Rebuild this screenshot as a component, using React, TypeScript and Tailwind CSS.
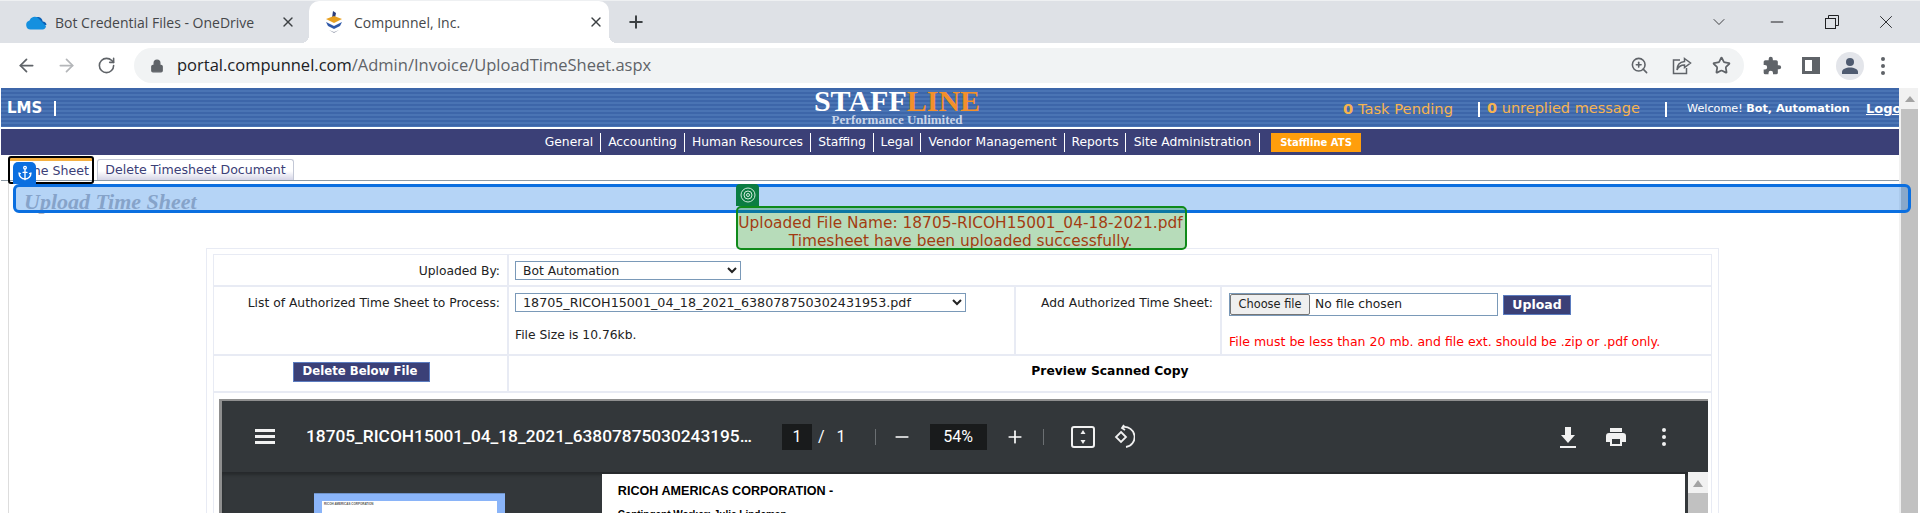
import { ArrowLeft, ArrowRight, Anchor, ChevronDown, Lock, Minus, Plus, RotateCw, Star, X, ZoomIn } from "lucide-react";

const verdana = "font-['DejaVu_Sans',sans-serif]";

function OneDriveIcon() {
  return (
    <svg width="22" height="16" viewBox="0 0 22 16">
      <path d="M8 5a5.5 5.5 0 0 1 9.7 2.4A4 4 0 0 1 21.5 11H9z" fill="#0a5fb4" />
      <path d="M5.5 15.5a4.6 4.6 0 0 1-1-9 5.5 5.5 0 0 1 8.6-2.6L21 12a4 4 0 0 1-3.5 3.5z" fill="#1490df" />
    </svg>
  );
}

function CompunnelIcon() {
  return (
    <svg width="20" height="24" viewBox="0 0 20 24">
      <path d="M9 1l3 2-1 5H8z" fill="#2c3e7c" />
      <path d="M2 9l8-3 8 3-8 4z" fill="#e8a020" />
      <path d="M2 12l8 4 8-4-2 4-6 3-6-3z" fill="#2f58a8" />
      <path d="M5 20l5 2 5-2-5 3z" fill="#9aa0b0" />
    </svg>
  );
}

function PuzzleIcon() {
  return (
    <svg width="20" height="20" viewBox="0 0 24 24" fill="#5f6368">
      <path d="M20.5 11H19V7a2 2 0 0 0-2-2h-4V3.5a2.5 2.5 0 0 0-5 0V5H4a2 2 0 0 0-2 2v3.8h1.5a2.7 2.7 0 0 1 0 5.4H2V20a2 2 0 0 0 2 2h3.8v-1.5a2.7 2.7 0 0 1 5.4 0V22H17a2 2 0 0 0 2-2v-4h1.5a2.5 2.5 0 0 0 0-5z" />
    </svg>
  );
}

function RestoreIcon() {
  return (
    <svg className="ml-[38px]" width="14" height="14" viewBox="0 0 14 14" fill="none" stroke="#202124" strokeWidth="1">
      <rect x="0.500" y="3.500" width="10" height="10" />
      <path d="M3.500 3.500V0.500h10v10h-3" />
    </svg>
  );
}

function ShareIcon() {
  return (
    <svg className="ml-[23px]" width="20" height="18" viewBox="0 0 20 18" fill="none" stroke="#5f6368" strokeWidth="1.500">
      <path d="M8 3H1.500v13.500h13V11" />
      <path d="M12.500 1.500L18.500 6l-6 4.500V8C9 8 6.500 9.500 5 13c0-5 3-8 7.500-8.500z" />
    </svg>
  );
}

function BrowserChrome() {
  return (
    <>
      <div className="relative flex h-[43px] items-end border-t border-t-[#eef0f2] bg-[#dee1e6] font-['Open_Sans',sans-serif] text-[14px] text-[#45474a]">
        <div className="flex h-[42px] w-[309px] items-center pl-[25px]">
          <OneDriveIcon />
          <span className="ml-[8px] w-[225px] truncate">Bot Credential Files - OneDrive</span>
          <X size={16} strokeWidth={2} className="text-[#3c4043]" />
        </div>
        <div className="relative flex h-[42px] w-[300px] items-center rounded-t-[10px] bg-white pl-[15px]">
          <span className="absolute bottom-0 left-[-8px] h-[8px] w-[8px] bg-[radial-gradient(circle_at_0_0,transparent_8px,white_8px)]" />
          <span className="absolute bottom-0 right-[-8px] h-[8px] w-[8px] bg-[radial-gradient(circle_at_100%_0,transparent_8px,white_8px)]" />
          <CompunnelIcon />
          <span className="ml-[10px] w-[234px] truncate">Compunnel, Inc.</span>
          <X size={16} strokeWidth={2} className="text-[#3c4043]" />
        </div>
        <div className="flex h-[42px] w-[1100px] items-center pl-[17px]">
          <Plus size={20} strokeWidth={2.4} className="text-[#3c4043]" />
        </div>
        <div className="flex h-[42px] items-center text-[#202124]">
          <ChevronDown size={20} strokeWidth={1} />
          <Minus size={20} strokeWidth={1.2} className="ml-[38px]" />
          <RestoreIcon />
          <X size={22} strokeWidth={1} className="ml-[36px]" />
        </div>
      </div>
      <div className="flex h-[45px] items-center bg-white text-[#5f6368]">
        <ArrowLeft size={21} className="ml-[16px]" />
        <ArrowRight size={21} className="ml-[19px] text-[#b4b6b9]" />
        <RotateCw size={19} className="ml-[20px]" />
        <div className="ml-[18px] flex h-[35px] w-[1610px] items-center rounded-full bg-[#f1f3f4] pl-[16px]">
          <Lock size={14} fill="#5f6368" />
          <span className="ml-[13px] font-['Open_Sans',sans-serif] text-[16.5px] text-[#5f6368]">
            <span className="text-[#202124]">portal.compunnel.com</span>/Admin/Invoice/UploadTimeSheet.aspx
          </span>
          <ZoomIn size={19} className="ml-auto" />
          <ShareIcon />
          <Star size={19} strokeWidth={2.2} className="ml-[20px] mr-[13px]" />
        </div>
        <div className="ml-[18px]"><PuzzleIcon /></div>
        <div className="ml-[20px] flex h-[17px] w-[18px] justify-end border-[3px] border-[#5f6368] bg-white">
          <div className="h-full w-[5px] bg-[#5f6368]" />
        </div>
        <div className="ml-[16px] flex h-[28px] w-[28px] items-center justify-center rounded-full bg-[#e3e5ea]">
          <svg width="18" height="18" viewBox="0 0 18 18" fill="#4f5b70">
            <circle cx="9" cy="5" r="4" />
            <path d="M1 17v-2c0-3 4-4.500 8-4.500s8 1.500 8 4.500v2z" />
          </svg>
        </div>
        <div className="ml-[17px] flex flex-col gap-[3px]">
          <span className="h-[4px] w-[4px] rounded-full bg-[#5f6368]" />
          <span className="h-[4px] w-[4px] rounded-full bg-[#5f6368]" />
          <span className="h-[4px] w-[4px] rounded-full bg-[#5f6368]" />
        </div>
      </div>
    </>
  );
}

function PortalHeader() {
  return (
    <div className="flex h-[39px] items-center whitespace-nowrap bg-[repeating-linear-gradient(180deg,#3d66a9_0px,#3d66a9_2px,#4a74b4_2px,#4a74b4_4px)] font-['DejaVu_Sans',sans-serif]">
      <span className="ml-[6px] mt-[1px] w-[47px] shrink-0 text-[15px] font-bold text-white">LMS</span>
      <span className="mt-[2px] h-[15px] w-[2px] shrink-0 bg-white" />
      <div className="ml-[759px] flex w-[164px] shrink-0 flex-col items-center">
        <span className="font-['Liberation_Serif',serif] text-[30px] leading-[24px] font-bold text-white">
          STAFF<span className="text-[#f3902b]">LINE</span>
        </span>
        <span className="mt-[1px] font-['Liberation_Serif',serif] text-[13px] leading-[12px] font-bold text-[#c9d4e8]">Performance Unlimited</span>
      </div>
      <span className="ml-[364px] mt-[3px] w-[110px] shrink-0 text-[14.700px] text-[#f7b34f]"><b>0</b> Task Pending</span>
      <span className="ml-[25px] mt-[3px] h-[15px] w-[2px] shrink-0 bg-white" />
      <span className="ml-[7px] mt-[3px] w-[152px] shrink-0 text-[14.500px] text-[#f7b34f]"><b>0</b> unreplied message</span>
      <span className="ml-[26px] mt-[3px] h-[15px] w-[2px] shrink-0 bg-white" />
      <span className="ml-[20px] mt-[3px] w-[162px] shrink-0 text-[11.200px] text-white">Welcome! <b>Bot, Automation</b></span>
      <span className="ml-[17px] mt-[2px] w-[33px] shrink-0 overflow-hidden text-[13px] font-bold text-white underline">Logout</span>
    </div>
  );
}

function NavBar() {
  return (
    <div className="flex h-[26px] items-center bg-[#3b4077] pl-[537px] font-['DejaVu_Sans',sans-serif] text-[12.300px] text-white">
      <span className="h-[19px] w-[63px] border-r border-white text-center leading-[18px]">General</span>
      <span className="h-[19px] w-[84px] border-r border-white text-center leading-[18px]">Accounting</span>
      <span className="h-[19px] w-[126px] border-r border-white text-center leading-[18px]">Human Resources</span>
      <span className="h-[19px] w-[63px] border-r border-white text-center leading-[18px]">Staffing</span>
      <span className="h-[19px] w-[47px] border-r border-white text-center leading-[18px]">Legal</span>
      <span className="h-[19px] w-[144px] border-r border-white text-center leading-[18px]">Vendor Management</span>
      <span className="h-[19px] w-[61px] border-r border-white text-center leading-[18px]">Reports</span>
      <span className="h-[19px] w-[134px] border-r border-white text-center leading-[18px]">Site Administration</span>
      <span className="ml-[11px] h-[19px] w-[90px] bg-[#ff9e0c] text-center text-[10px] leading-[19px] font-bold">Staffline ATS</span>
    </div>
  );
}

function TabRow() {
  return (
    <div className={`flex h-[26px] items-end border-b border-[#8d9aa5] pl-[9px] text-[12.600px] text-[#3b4077] ${verdana}`}>
      <div className="h-[22px] w-[84px] border-t-[3px] border-t-[#f5b041] pr-[5px] text-right leading-[20px] whitespace-nowrap">Time Sheet</div>
      <div className="ml-[3px] h-[21px] w-[197px] rounded-t-[3px] border border-b-0 border-[#c3c8d6] bg-[linear-gradient(180deg,#ffffff_55%,#d5d5e6)] text-center leading-[20px] whitespace-nowrap">
        Delete Timesheet Document
      </div>
    </div>
  );
}

function Message() {
  return (
    <div className="flex h-[67px] flex-col">
      <h2 className="ml-[15px] mt-[10px] h-[24px] font-['Liberation_Serif',serif] text-[22px] leading-[22px] font-bold text-[#bcb9bf] italic">
        Upload Time Sheet
      </h2>
      <div className={`ml-[13px] mt-[1px] text-center text-[15.400px] leading-[18px] text-[#e2170f] ${verdana}`}>
        <p>Uploaded File Name: 18705-RICOH15001_04-18-2021.pdf</p>
        <p>Timesheet have been uploaded successfully.</p>
      </div>
    </div>
  );
}

function UploadForm() {
  return (
    <div className={`ml-[197px] w-[1513px] border border-[#e8ebf4] px-[6px] pt-[5px] pb-0 text-[12.300px] text-[#222222] ${verdana}`}>
      <div className="border border-[#e8ebf4]">
        <div className="flex h-[32px] border-b-2 border-[#e8ebf4]">
          <div className="w-[295px] border-r-2 border-[#e8ebf4] pt-[7px] pr-[7px] text-right">Uploaded By:</div>
          <div className="pl-[6px] pt-[6px]">
            <select defaultValue="bot" className="h-[19px] w-[226px] border border-[#7a99b8] bg-white pl-[3px] text-[12.300px]">
              <option value="bot">Bot Automation</option>
            </select>
          </div>
        </div>
        <div className="flex h-[69px] border-b-2 border-[#e8ebf4]">
          <div className="w-[295px] border-r-2 border-[#e8ebf4] pt-[7px] pr-[7px] text-right">List of Authorized Time Sheet to Process:</div>
          <div className="w-[507px] border-r-2 border-[#e8ebf4] pl-[6px] pt-[6px]">
            <select defaultValue="f" className="h-[19px] w-[451px] border border-[#7a99b8] bg-white pl-[3px] text-[12.700px]">
              <option value="f">18705_RICOH15001_04_18_2021_638078750302431953.pdf</option>
            </select>
            <p className="mt-[14px]">File Size is 10.76kb.</p>
          </div>
          <div className="w-[206px] border-r-2 border-[#e8ebf4] pt-[7px] pr-[7px] text-right">Add Authorized Time Sheet:</div>
          <div className="pl-[7px] pt-[6px]">
            <div className="flex items-center">
              <div className="flex h-[23px] w-[269px] items-center border border-[#7a99b8] bg-white">
                <button className="h-[21px] w-[80px] rounded-[2px] border border-[#767676] bg-[#efefef] text-[11.400px]">Choose file</button>
                <span className="ml-[5px]">No file chosen</span>
              </div>
              <button className="ml-[5px] h-[20px] w-[68px] border border-[#5b7cc0] bg-[#3b4077] text-[12.500px] font-bold text-white">Upload</button>
            </div>
            <p className="mt-[17px] text-[12.500px] text-[#ff0000]">File must be less than 20 mb. and file ext. should be .zip or .pdf only.</p>
          </div>
        </div>
        <div className="flex h-[37px] border-b-2 border-[#e8ebf4]">
          <div className="flex w-[295px] justify-center border-r-2 border-[#e8ebf4] pl-[2px] pt-[6px]">
            <button className="h-[20px] w-[137px] border border-[#5b7cc0] bg-[#3b4077] pr-[3px] text-[11.700px] font-bold text-white">Delete Below File</button>
          </div>
          <div className="flex-1 pt-[6px] text-center font-bold text-black">Preview Scanned Copy</div>
        </div>
        <PdfViewer />
      </div>
    </div>
  );
}

function PdfViewer() {
  return (
    <div className="pl-[5px] pr-[3px] pt-[6px]">
      <div className="border-t-2 border-l-[3px] border-[#8f8f8f] bg-[#33373a] font-['Roboto',sans-serif] text-white">
        <div className="flex h-[71px] items-center">
          <div className="ml-[33px] flex w-[20px] flex-col gap-[3px]">
            <span className="h-[3px] bg-[#f1f1f1]" />
            <span className="h-[3px] bg-[#f1f1f1]" />
            <span className="h-[3px] bg-[#f1f1f1]" />
          </div>
          <span className="ml-[31px] w-[450px] truncate text-[17.300px] font-medium">18705_RICOH15001_04_18_2021_638078750302431953.pdf</span>
          <span className="ml-[26px] h-[26px] w-[30px] bg-[#191b1c] text-center text-[16px] leading-[26px]">1</span>
          <span className="ml-[6px] text-[16px]">/</span>
          <span className="ml-[12px] text-[16px]">1</span>
          <span className="ml-[29px] h-[16px] w-px bg-[#6b6f72]" />
          <Minus size={20} strokeWidth={2} className="ml-[16px]" />
          <span className="ml-[18px] h-[26px] w-[57px] bg-[#191b1c] text-center text-[16px] leading-[26px]">54%</span>
          <Plus size={20} strokeWidth={2} className="ml-[18px]" />
          <span className="ml-[18px] h-[16px] w-px bg-[#6b6f72]" />
          <svg className="ml-[27px]" width="24" height="24" viewBox="0 0 24 24" fill="none" stroke="#f1f1f1" strokeWidth="2">
            <rect x="1" y="2" width="22" height="20" rx="2" />
            <path d="M12 5l2.500 4h-5zM12 19l2.500-4h-5z" fill="#f1f1f1" stroke="none" />
          </svg>
          <svg className="ml-[16px]" width="24" height="26" viewBox="0 0 24 26" fill="none" stroke="#f1f1f1" strokeWidth="1.800">
            <path d="M10 8l5 5-5 5-5-5z" />
            <path d="M12 3a10 10 0 0 1 3 20" />
            <path d="M13 1l-2 3 3 2" />
          </svg>
          <svg className="ml-[423px]" width="20" height="24" viewBox="0 0 20 24" fill="#f1f1f1">
            <path d="M7 2h6v8h4l-7 8-7-8h4zM2 21h16v2H2z" />
          </svg>
          <svg className="ml-[26px]" width="24" height="24" viewBox="0 0 24 24" fill="#f1f1f1">
            <path d="M19 8H5a3 3 0 0 0-3 3v6h4v4h12v-4h4v-6a3 3 0 0 0-3-3zm-3 11H8v-5h8zM18 3H6v4h12z" />
          </svg>
          <div className="ml-[34px] flex flex-col gap-[3px]">
            <span className="h-[4px] w-[4px] rounded-full bg-[#f1f1f1]" />
            <span className="h-[4px] w-[4px] rounded-full bg-[#f1f1f1]" />
            <span className="h-[4px] w-[4px] rounded-full bg-[#f1f1f1]" />
          </div>
        </div>
        <div className="flex h-[60px] shadow-[inset_0_3px_3px_rgba(0,0,0,0.25)]">
          <div className="w-[380px] pl-[92px] pt-[21px]">
            <div className="h-[40px] w-[191px] border-t border-[#6f92c8] bg-[#8ab4f8] px-[8px] pt-[7px]">
              <div className="h-[30px] bg-white pl-[2px] pt-[1px] font-['Liberation_Sans',sans-serif] text-[3px] font-bold text-[#555555]">
                RICOH AMERICAS CORPORATION
              </div>
            </div>
          </div>
          <div className="mt-[2px] w-[1084px] bg-white pl-[16px] pt-[9px] font-['Liberation_Sans',sans-serif] text-black">
            <p className="text-[12.600px] leading-[16px] font-bold">RICOH AMERICAS CORPORATION -</p>
            <p className="mt-[10px] text-[10px] leading-[12px] font-bold">Contingent Worker: Julie Lindeman</p>
          </div>
          <div className="ml-[3px] flex w-[20px] flex-col items-center bg-[#f1f1f1] pt-[8px]">
            <span className="h-0 w-0 border-x-[5px] border-b-[7px] border-x-transparent border-b-[#a3a3a3]" />
            <span className="mt-[6px] h-full w-full bg-[#c1c1c1]" />
          </div>
        </div>
      </div>
    </div>
  );
}

function PageScrollbar() {
  return (
    <div className="flex w-[19px] flex-col items-center bg-[#f1f1f1] pl-[2px] pt-[8px]">
      <span className="h-0 w-0 border-x-[5px] border-b-[6px] border-x-transparent border-b-[#a3a3a3]" />
      <span className="mt-[7px] h-full w-full bg-[#c1c1c1]" />
    </div>
  );
}

function Overlays() {
  return (
    <>
      {/* highlight on the tab */}
      <div className="absolute left-[8px] top-[156px] h-[28px] w-[86px] rounded-[3px] border-2 border-black" />
      <div className="absolute left-[13px] top-[162px] flex h-[22px] w-[23px] items-center justify-center rounded-t-[5px] bg-[#0b6fe0]">
        <Anchor size={16} strokeWidth={2} className="text-white" />
      </div>
      {/* highlight on the title bar */}
      <div className="absolute left-[13px] top-[184px] h-[29px] w-[1898px] rounded-[6px] border-[3px] border-[#0b6fe0] bg-[#0b6fe0]/30" />
      {/* highlight on the message */}
      <div className="absolute left-[736px] top-[184px] flex h-[22px] w-[23px] items-center justify-center rounded-t-[4px] bg-[#0b7d42]">
        <svg width="16" height="16" viewBox="0 0 16 16" fill="none" stroke="#cfe9da" strokeWidth="1">
          <circle cx="8" cy="8" r="7" />
          <circle cx="8" cy="8" r="4" />
          <circle cx="8" cy="8" r="1.500" />
        </svg>
      </div>
      <div className="absolute left-[736px] top-[206px] h-[44px] w-[451px] rounded-[5px] border-2 border-[#0f8a1a] bg-[#0f8a1a]/30" />
    </>
  );
}

export default function App() {
  return (
    <div className="relative h-[513px] w-[1920px] overflow-hidden bg-white">
      <BrowserChrome />
      <div className="flex h-[425px] w-[1918px] pl-px">
        <div className="w-[1898px] overflow-hidden">
          <PortalHeader />
          <div className="h-[2px]" />
          <NavBar />
          <TabRow />
          <div className="ml-[7px] h-full border-l border-[#dddddd]">
            <Message />
            <UploadForm />
          </div>
        </div>
        <PageScrollbar />
      </div>
      <Overlays />
    </div>
  );
}
